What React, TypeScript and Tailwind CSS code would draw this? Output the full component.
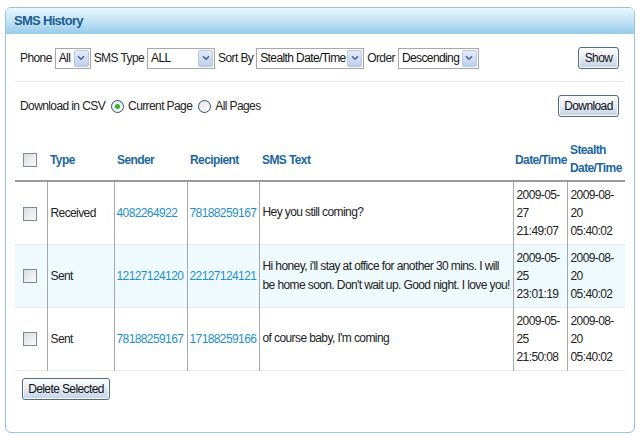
import { useState } from 'react';

type Sms = {
  type: string;
  sender: string;
  recipient: string;
  text: string;
  date: [string, string, string];
  stealth: [string, string, string];
};

const rows: Sms[] = [
  {
    type: 'Received',
    sender: '4082264922',
    recipient: '78188259167',
    text: 'Hey you still coming?',
    date: ['2009-05-', '27', '21:49:07'],
    stealth: ['2009-08-', '20', '05:40:02'],
  },
  {
    type: 'Sent',
    sender: '12127124120',
    recipient: '22127124121',
    text: "Hi honey, i'll stay at office for another 30 mins. I will be home soon. Don't wait up. Good night. I love you!",
    date: ['2009-05-', '25', '23:01:19'],
    stealth: ['2009-08-', '20', '05:40:02'],
  },
  {
    type: 'Sent',
    sender: '78188259167',
    recipient: '17188259166',
    text: "of course baby, I'm coming",
    date: ['2009-05-', '25', '21:50:08'],
    stealth: ['2009-08-', '20', '05:40:02'],
  },
];

function Select({ value, width }: { value: string; width: string }) {
  return (
    <span className={`inline-flex h-[21px] items-center border border-[#a7a6aa] bg-white ${width}`}>
      <span className="flex-1 overflow-hidden whitespace-nowrap pl-[3px] text-[#111]">{value}</span>
      <span className="mr-[1px] flex h-[17px] w-[15px] shrink-0 items-center justify-center rounded-[2px] border border-[#b5c9e3] bg-gradient-to-b from-[#e3ecf8] to-[#bcd0ec]">
        <svg width="8" height="6" viewBox="0 0 8 6">
          <path d="M1 1.2 L4 4.2 L7 1.2" fill="none" stroke="#4d6185" strokeWidth="1.6" />
        </svg>
      </span>
    </span>
  );
}

function Btn({ children, className = '' }: { children: React.ReactNode; className?: string }) {
  return (
    <button className={`h-[22px] whitespace-nowrap rounded-[3px] border border-[#4f6a8e] bg-gradient-to-b from-[#fdfeff] via-[#e4ebf5] to-[#c2d1e6] px-[4px] text-[#111] shadow-[inset_0_0_0_1px_#fff] ${className}`}>
      {children}
    </button>
  );
}

function Check() {
  return <span className="inline-block h-[14px] w-[14px] border border-[#7a8a9a] bg-gradient-to-br from-[#dcdcdc] to-[#fbfbfb] align-middle" />;
}

function Radio({ on }: { on: boolean }) {
  return (
    <span className="inline-flex h-[13px] w-[13px] items-center justify-center rounded-full border border-[#2a4f75] bg-gradient-to-br from-[#e6e6e6] to-white">
      {on && <span className="h-[5px] w-[5px] rounded-full bg-[#2fb32f]" />}
    </span>
  );
}

export default function App() {
  const [page, setPage] = useState<'current' | 'all'>('current');
  const font = { fontFamily: '"Liberation Sans", Arial, sans-serif' };

  return (
    <div className="h-[440px] w-[640px] bg-white pt-[7px] pl-[5px] text-[12px] leading-[18px] tracking-[-0.6px] text-[#222]" style={font}>
      <div className="h-[426px] w-[630px] overflow-hidden rounded-[6px] border border-[#9cc4dc]">
        <div className="flex h-[26px] items-center bg-gradient-to-b from-[#eaf6fc] via-[#c2e3f4] to-[#96cbea] pl-[8px] text-[13px] font-bold tracking-[-0.7px] text-[#1d5d94]">
          SMS History
        </div>

        <div className="px-[9px]">
          <div className="mt-[13px] flex items-center gap-[3px] pl-[5px]">
            <span>Phone</span>
            <Select value="All" width="w-[36px]" />
            <span>SMS Type</span>
            <Select value="ALL" width="w-[68px]" />
            <span>Sort By</span>
            <Select value="Stealth Date/Time" width="w-[108px]" />
            <span>Order</span>
            <Select value="Descending" width="w-[81px]" />
            <Btn className="ml-auto mr-[6px] w-[41px]">Show</Btn>
          </div>

          <div className="mt-[12px] border-t border-[#e4eaee]" />

          <div className="mt-[13px] flex items-center pl-[5px]">
            <span>Download in CSV</span>
            <label className="ml-[6px] flex items-center gap-[4px]" onClick={() => setPage('current')}>
              <Radio on={page === 'current'} />
              <span>Current Page</span>
            </label>
            <label className="ml-[6px] flex items-center gap-[4px]" onClick={() => setPage('all')}>
              <Radio on={page === 'all'} />
              <span>All Pages</span>
            </label>
            <Btn className="ml-auto mr-[6px] w-[61px]">Download</Btn>
          </div>

          <table className="mt-[21px] w-[610px] table-fixed border-collapse">
            <colgroup>
              <col className="w-[32px]" />
              <col className="w-[67px]" />
              <col className="w-[73px]" />
              <col className="w-[72px]" />
              <col className="w-[254px]" />
              <col className="w-[54px]" />
              <col className="w-[58px]" />
            </colgroup>
            <thead>
              <tr className="h-[43px] border-b-2 border-[#9a9a9a] text-left font-bold whitespace-nowrap text-[#1c679f]">
                <th className="pl-[8px] align-middle"><Check /></th>
                <th className="pl-[3px] pt-[2px]">Type</th>
                <th className="pl-[3px] pt-[2px]">Sender</th>
                <th className="pl-[3px] pt-[2px]">Recipient</th>
                <th className="pl-[3px] pt-[2px]">SMS Text</th>
                <th className="pl-[2px] pt-[2px]">Date/Time</th>
                <th className="pl-[3px] leading-[18px]">Stealth<br />Date/Time</th>
              </tr>
            </thead>
            <tbody>
              {rows.map((r, i) => (
                <tr key={i} className={`h-[63px] border-b border-[#e3ebef] ${i === 1 ? 'bg-[#eefafd]' : 'bg-white'}`}>
                  <td className="pl-[8px] align-middle"><Check /></td>
                  <td className="border-l border-[#a8a8a8] pl-[3px]">{r.type}</td>
                  <td className="border-l border-[#a8a8a8] pl-[2px] text-[#1d8fd0]">{r.sender}</td>
                  <td className="border-l border-[#a8a8a8] pl-[2px] text-[#1d8fd0]">{r.recipient}</td>
                  <td className="border-l border-[#a8a8a8] pl-[3px] pr-[2px] leading-[19px]">{r.text}</td>
                  <td className="border-l border-[#a8a8a8] pl-[3px] whitespace-nowrap">
                    {r.date[0]}<br />{r.date[1]}<br />{r.date[2]}
                  </td>
                  <td className="border-l border-[#a8a8a8] pl-[3px] whitespace-nowrap">
                    {r.stealth[0]}<br />{r.stealth[1]}<br />{r.stealth[2]}
                  </td>
                </tr>
              ))}
            </tbody>
          </table>

          <Btn className="mt-[7px] ml-[7px] w-[88px]">Delete Selected</Btn>
        </div>
      </div>
    </div>
  );
}
